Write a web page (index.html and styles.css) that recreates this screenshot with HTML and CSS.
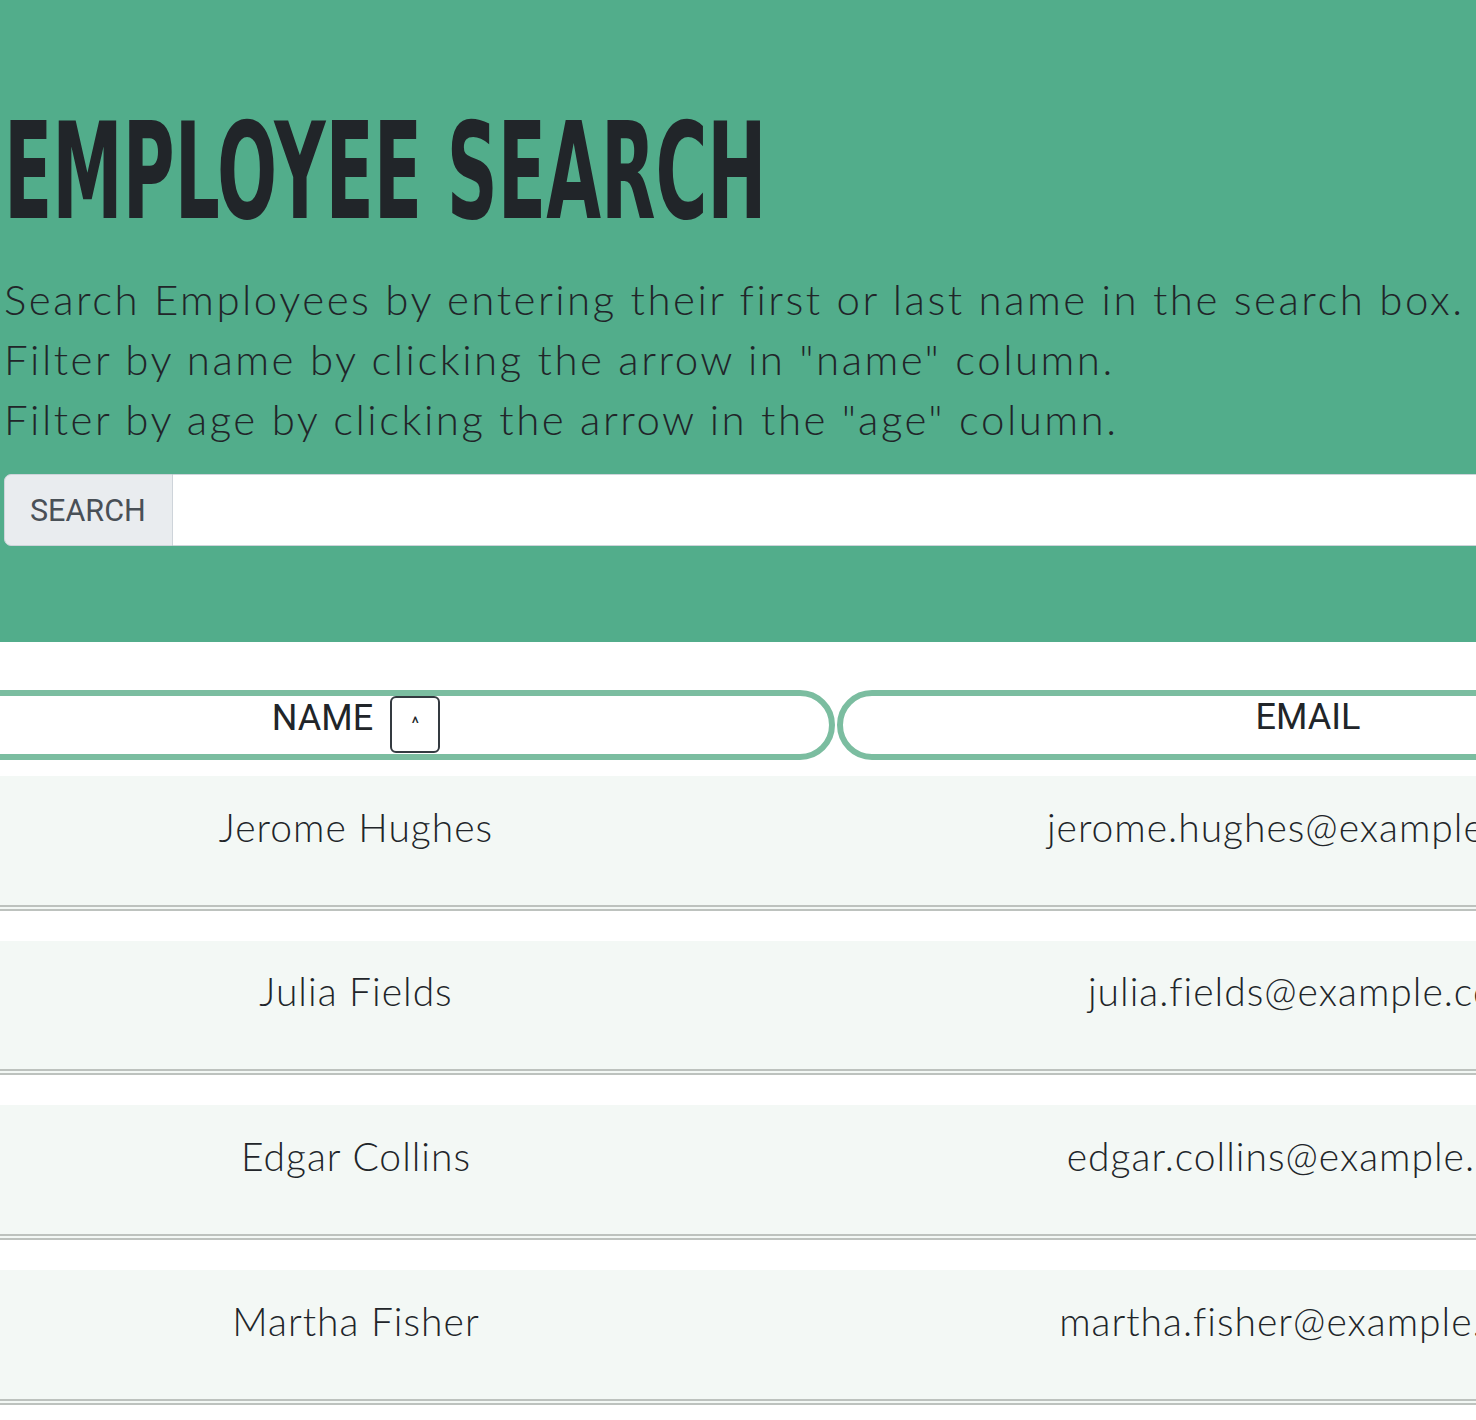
FILE: index.html
```html
<!DOCTYPE html>
<html lang="en">
<head>
<meta charset="utf-8">
<title>Employee Search</title>
<link rel="stylesheet" href="styles.css">
</head>
<body>
<header class="hero">
  <h1 class="title">Employee Search</h1>
  <p class="lead">Search Employees by entering their first or last name in the search box.<br>Filter by name by clicking the arrow in "name" column.<br>Filter by age by clicking the arrow in the "age" column.</p>
  <div class="search">
    <span class="search-label">SEARCH</span>
    <input class="search-input" type="text" aria-label="Search">
  </div>
</header>
<main class="table">
  <div class="thead">
    <div class="th">NAME<button class="sort-btn" type="button">^</button></div>
    <div class="th">EMAIL</div>
  </div>
  <div class="tbody">
    <div class="row"><div class="cell">Jerome Hughes</div><div class="cell">jerome.hughes@example.com</div></div>
    <div class="row"><div class="cell">Julia Fields</div><div class="cell">julia.fields@example.com</div></div>
    <div class="row"><div class="cell">Edgar Collins</div><div class="cell">edgar.collins@example.com</div></div>
    <div class="row"><div class="cell">Martha Fisher</div><div class="cell">martha.fisher@example.com</div></div>
  </div>
</main>
</body>
</html>
```
FILE: styles.css
```css
html {
  scrollbar-width: none;
}
body {
  margin: 0;
  overflow-x: hidden;
  background: #ffffff;
  color: #212529;
  font-family: Lato, "Open Sans", sans-serif;
}
.hero {
  background: #52ad8b;
  padding: 105px 0 96px 4px;
}
.title {
  margin: 0;
  font-family: "Liberation Sans Narrow", "DejaVu Sans Condensed", sans-serif;
  font-weight: 700;
  font-size: 134px;
  line-height: 134px;
  color: #212529;
  text-transform: uppercase;
  white-space: nowrap;
  transform: scaleX(0.587);
  transform-origin: left center;
}
.lead {
  margin: 30px 0 0;
  font-family: Lato, sans-serif;
  font-weight: 300;
  font-size: 42px;
  line-height: 60px;
  letter-spacing: 2.5px;
  white-space: nowrap;
  color: #212529;
}
.search {
  display: flex;
  margin-top: 25px;
  width: 1700px;
  height: 72px;
}
.search-label {
  display: flex;
  align-items: center;
  box-sizing: border-box;
  width: 169px;
  padding: 0 0 0 25px;
  background: #e9ecef;
  border: 1px solid #ced4da;
  border-radius: 7px 0 0 7px;
  font-family: Roboto, sans-serif;
  font-size: 30.5px;
  color: #495057;
}
.search-input {
  flex: 1;
  margin: 0;
  border: 1px solid #ced4da;
  border-left: 0;
  background: #ffffff;
  outline: none;
}
.table {
  display: block;
  margin: 48px 0 0 -123px;
  width: 1902px;
}
.thead {
  display: grid;
  grid-template-columns: 958px 942px;
  column-gap: 2px;
}
.th {
  height: 70px;
  box-sizing: border-box;
  border: 6px solid #7bbda0;
  border-radius: 35px;
  text-align: center;
  font-family: Roboto, sans-serif;
  font-weight: 400;
  font-size: 36px;
  line-height: 43.4px;
  color: #212529;
  white-space: nowrap;
}
.sort-btn {
  display: inline-block;
  vertical-align: baseline;
  box-sizing: border-box;
  width: 50px;
  height: 57px;
  margin: 0 0 0 17px;
  padding: 13.85px 0 15.15px;
  border: 2px solid #343a40;
  border-radius: 6px;
  background: #ffffff;
  font-family: Roboto, sans-serif;
  font-size: 18px;
  line-height: 24px;
  color: #212529;
}
.tbody {
  margin-top: 16px;
}
.row {
  display: grid;
  grid-template-columns: 958px 942px;
  column-gap: 2px;
  box-sizing: border-box;
  height: 134.67px;
  padding-top: 21.7px;
  margin-bottom: 30px;
  background: #f3f8f5;
  border-bottom: 6px double #bdc2be;
  font-family: Lato, sans-serif;
  font-weight: 300;
  font-size: 39px;
  line-height: 58.5px;
  letter-spacing: 1px;
  text-align: center;
  color: #212529;
}
.cell {
  white-space: nowrap;
}
```
